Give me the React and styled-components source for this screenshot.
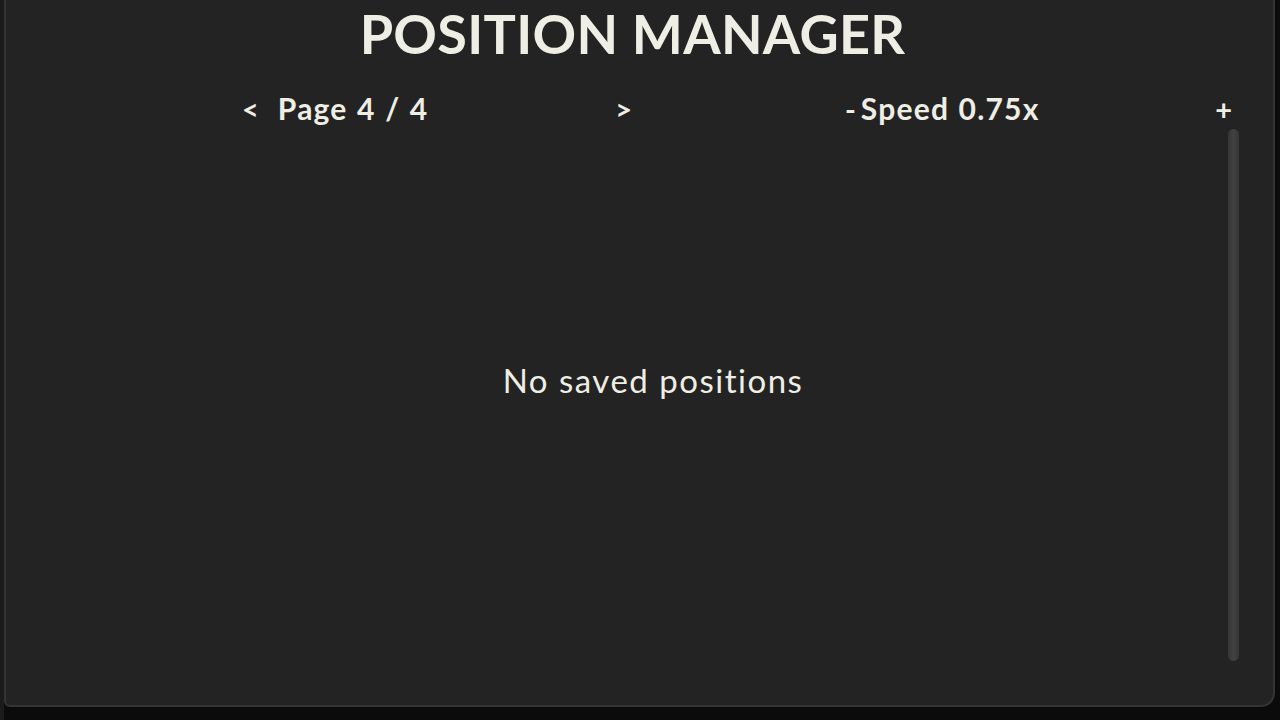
import React from "react";
import styled, { createGlobalStyle } from "styled-components";

const GlobalStyle = createGlobalStyle`
  html, body {
    margin: 0;
    padding: 0;
    background: #0b0b0b;
  }
  body {
    font-family: Lato, "Noto Sans", sans-serif;
    color: #efeee4;
    overflow: hidden;
  }
`;

const Screen = styled.div`
  width: 1280px;
  height: 720px;
  box-sizing: border-box;
  padding: 0 5px 0 4px;
  background: linear-gradient(to right, #1b1b1b 4px, #0b0b0b 4px);
`;

const Panel = styled.section`
  height: 707px;
  box-sizing: border-box;
  display: flex;
  flex-direction: column;
  background: #232323;
  border: 2px solid #343434;
  border-top: none;
  border-radius: 0 0 14px 6px;
`;

const Title = styled.h1`
  margin: 0;
  padding: 6px 14px 0 0;
  font-size: 54px;
  font-weight: 700;
  line-height: 56px;
  text-align: center;
  letter-spacing: 0.3px;
`;

const Controls = styled.div`
  display: flex;
  gap: 213px;
  padding: 28px 0 0 236px;
  height: 36px;
  align-items: center;
`;

const Stepper = styled.div`
  display: flex;
  align-items: center;
  justify-content: space-between;
  width: ${(p) => p.width}px;
`;

const Group = styled.div`
  display: flex;
  align-items: center;
  gap: ${(p) => p.gap}px;
`;

const StepButton = styled.button`
  background: none;
  border: none;
  padding: 0;
  color: inherit;
  font-family: inherit;
  font-size: 29px;
  font-weight: 700;
  line-height: 1;
  cursor: pointer;
`;

const Label = styled.span`
  font-size: 30px;
  font-weight: 700;
  letter-spacing: 1.2px;
  word-spacing: 1px;
`;

const Body = styled.div`
  flex: 1;
  display: flex;
  padding: 3px 34px 44px 0;
`;

const List = styled.div`
  flex: 1;
  display: flex;
  align-items: center;
  justify-content: center;
  padding: 0 0 30px 72px;
`;

const Empty = styled.p`
  margin: 0;
  font-size: 33px;
  font-weight: 400;
  letter-spacing: 1.5px;
`;

const Scrollbar = styled.div`
  width: 11px;
  border-radius: 6px;
  background: linear-gradient(to right, #363636, #414141 50%, #363636);
`;

export default function App() {
  return (
    <Screen>
      <GlobalStyle />
      <Panel>
        <Title>POSITION MANAGER</Title>
        <Controls>
          <Stepper width={390}>
            <Group gap={19}>
              <StepButton>&lt;</StepButton>
              <Label>Page 4 / 4</Label>
            </Group>
            <StepButton>&gt;</StepButton>
          </Stepper>
          <Stepper width={387}>
            <Group gap={5}>
              <StepButton>-</StepButton>
              <Label>Speed 0.75x</Label>
            </Group>
            <StepButton>+</StepButton>
          </Stepper>
        </Controls>
        <Body>
          <List>
            <Empty>No saved positions</Empty>
          </List>
          <Scrollbar />
        </Body>
      </Panel>
    </Screen>
  );
}
